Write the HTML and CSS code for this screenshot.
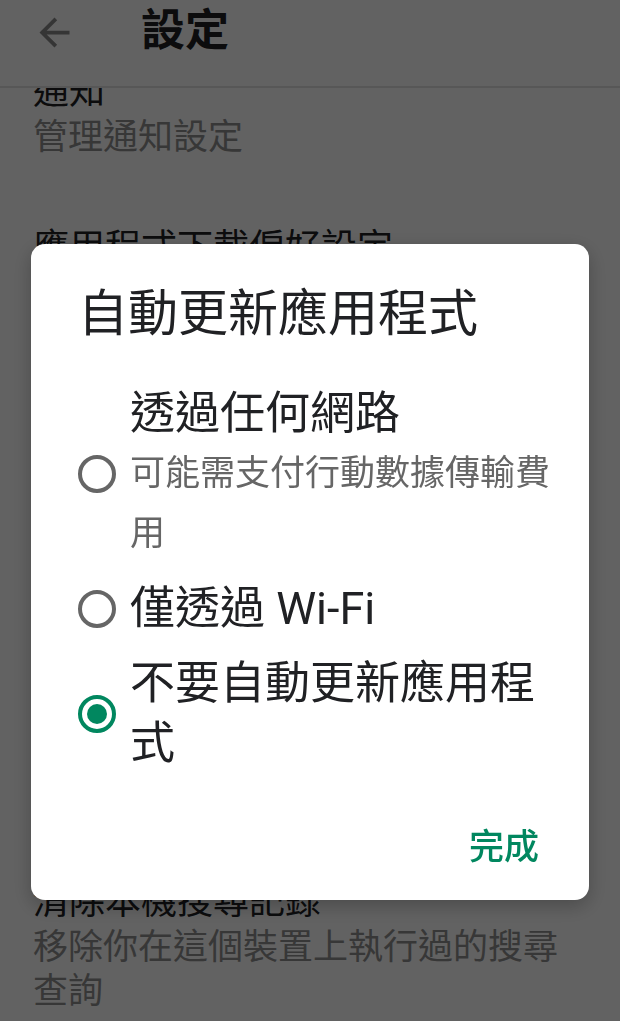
FILE: index.html
```html
<!DOCTYPE html>
<html lang="zh-Hant">
<head>
    <meta charset="UTF-8">
    <meta name="viewport" content="width=device-width, initial-scale=1.0">
    <title>設定</title>
    <link rel="stylesheet" href="styles.css">
</head>
<body>
    <header class="app-bar">
        <svg class="back" viewBox="0 0 24 24" aria-hidden="true">
            <path d="M20 11H7.83l5.59-5.59L12 4l-8 8 8 8 1.41-1.41L7.83 13H20v-2z"/>
        </svg>
        <h1>設定</h1>
    </header>

    <main class="list">
        <div class="list-inner">
            <div class="item">
                <div class="item-title">通知</div>
                <div class="item-sub">管理通知設定</div>
            </div>
            <div class="item">
                <div class="item-title">應用程式下載偏好設定</div>
                <div class="item-sub">透過任何網路</div>
            </div>
            <div class="item">
                <div class="item-title">自動更新應用程式</div>
                <div class="item-sub">不要自動更新應用程式</div>
            </div>
            <div class="item">
                <div class="item-title">主題</div>
                <div class="item-sub">系統預設</div>
            </div>
            <div class="item group-end">
                <div class="item-title">在主畫面加入圖示</div>
                <div class="item-sub">適用於新的應用程式</div>
            </div>
            <div class="item">
                <div class="item-title">清除本機搜尋記錄</div>
                <div class="item-sub">移除你在這個裝置上執行過的搜尋查詢</div>
            </div>
        </div>
    </main>

    <div class="scrim">
        <div class="dialog">
            <h2>自動更新應用程式</h2>

            <div class="options">
                <label class="option">
                    <span class="radio"></span>
                    <span class="option-text">
                        <span class="option-title">透過任何網路</span>
                        <span class="option-sub">可能需支付行動數據傳輸費用</span>
                    </span>
                </label>
                <label class="option">
                    <span class="radio"></span>
                    <span class="option-text">
                        <span class="option-title">僅透過 Wi-Fi</span>
                    </span>
                </label>
                <label class="option">
                    <span class="radio checked"></span>
                    <span class="option-text">
                        <span class="option-title">不要自動更新應用程式</span>
                    </span>
                </label>
            </div>

            <div class="actions">
                <button type="button">完成</button>
            </div>
        </div>
    </div>
</body>
</html>
```

FILE: styles.css
```css
body {
    font-family: Roboto, "Noto Sans CJK TC", sans-serif;
    background-color: #fff;
    margin: 0;
    padding: 0;
    width: 620px;
    height: 1021px;
    overflow: hidden;
    display: flex;
    flex-direction: column;
}

/* top bar */
.app-bar {
    display: flex;
    align-items: flex-start;
    height: 77px;
    padding: 9px 0 0 32px;
    border-bottom: 2px solid #e2e2e2;
    background-color: #fff;
    flex-shrink: 0;
}

.back {
    width: 45px;
    height: 45px;
    margin-top: 1px;
    fill: #8a8a8a;
}

.app-bar h1 {
    margin: 0 0 0 64px;
    font-size: 44px;
    line-height: 44px;
    font-weight: 700;
    color: #202124;
}

/* settings list, scrolled a little */
.list {
    flex: 1;
    overflow: hidden;
}

.list-inner {
    margin-top: -52px;
}

.item {
    padding: 32px 33px;
}

.item.group-end {
    padding-bottom: 62px;
}

.item-title {
    font-size: 36px;
    line-height: 48px;
    color: #202124;
}

.item-sub {
    font-size: 35px;
    line-height: 44px;
    color: #909090;
}

/* dialog */
.scrim {
    position: fixed;
    inset: 0;
    background-color: rgba(0, 0, 0, 0.615);
    display: flex;
    align-items: flex-start;
}

.dialog {
    margin: 244px 0 0 31px;
    width: 558px;
    box-sizing: border-box;
    padding: 45px 24px 35px 47px;
    background-color: #fff;
    border-radius: 14px;
    box-shadow: 0 6px 20px rgba(0, 0, 0, 0.25);
}

.dialog h2 {
    margin: 0 0 45px 0;
    font-size: 50px;
    line-height: 50px;
    font-weight: 400;
    color: #202124;
}

.options {
    display: flex;
    flex-direction: column;
    gap: 15px;
}

.option {
    display: flex;
    align-items: center;
    gap: 14px;
}

.radio {
    width: 38px;
    height: 38px;
    box-sizing: border-box;
    border: 4px solid #666;
    border-radius: 50%;
    flex-shrink: 0;
    display: flex;
    align-items: center;
    justify-content: center;
}

.radio.checked {
    border-color: #01875f;
}

.radio.checked::after {
    content: "";
    width: 20px;
    height: 20px;
    border-radius: 50%;
    background-color: #01875f;
}

.option-text {
    display: flex;
    flex-direction: column;
    flex: 1;
}

.option-title {
    font-size: 45px;
    line-height: 60px;
    color: #202124;
}

.option-sub {
    font-size: 35px;
    line-height: 60px;
    color: #666;
}

.actions {
    display: flex;
    justify-content: flex-end;
    margin-top: 56px;
}

.actions button {
    font-family: inherit;
    font-size: 35px;
    line-height: 35px;
    font-weight: 500;
    color: #01875f;
    background: none;
    border: none;
    padding: 0 26px 0 0;
    cursor: pointer;
}
```
